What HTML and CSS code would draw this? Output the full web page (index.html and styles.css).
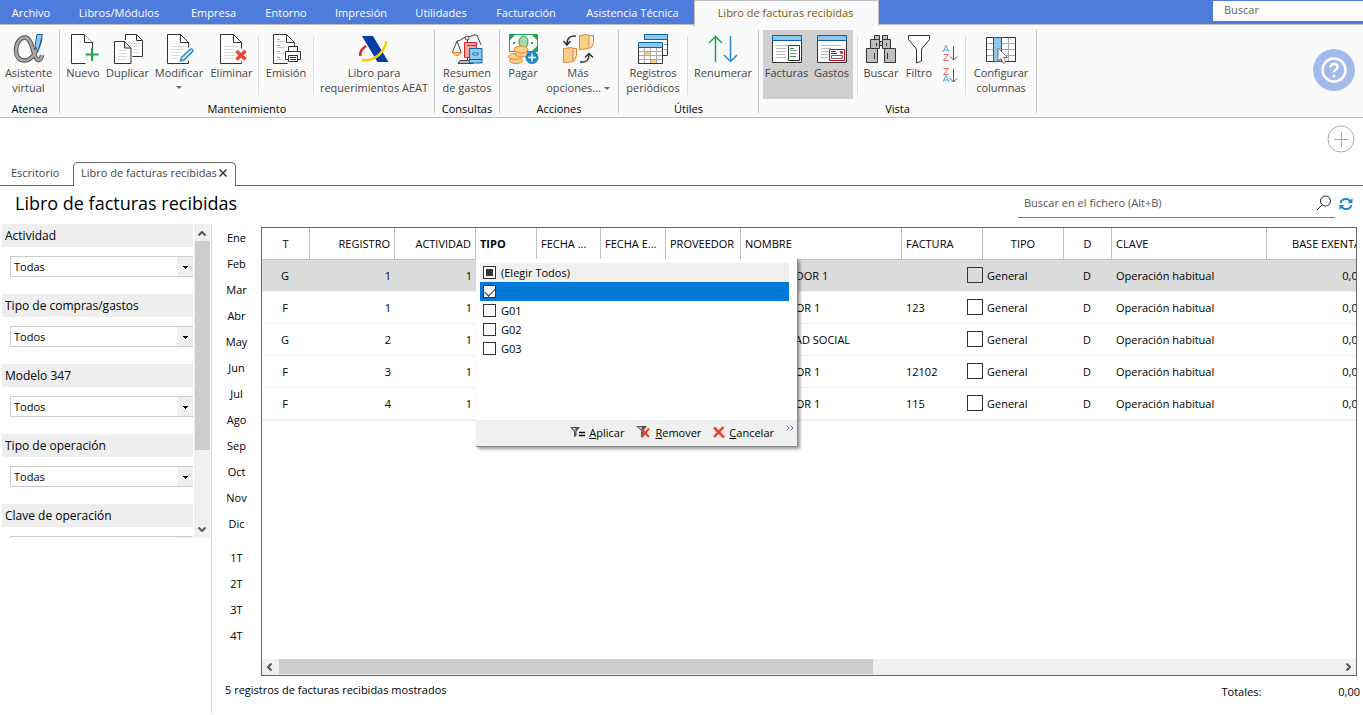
FILE: index.html
```
<!DOCTYPE html>
<html lang="es">
<head>
<meta charset="utf-8">
<title>Libro de facturas recibidas</title>
<link rel="stylesheet" href="styles.css">
</head>
<body>
<div class="app">
  <header class="menubar">
    <nav class="menu">
      <a href="#">Archivo</a><a href="#">Libros/Módulos</a><a href="#">Empresa</a><a href="#">Entorno</a><a href="#">Impresión</a><a href="#">Utilidades</a><a href="#">Facturación</a><a href="#">Asistencia Técnica</a><a href="#" class="current">Libro de facturas recibidas</a>
    </nav>
    <input class="menu-search" type="text" placeholder="Buscar" aria-label="Buscar">
  </header>

  <div class="ribbon">
    <section class="group g-atenea">
      <div class="tools">
        <button><svg class="ico" viewBox="12 33 32 32"><path d="M39.500 38C37 48 32 60.500 23.500 60.500C17.500 60.500 15 56 15 50C15 43 19 37.500 24 37.500C32 37.500 32 60 37.500 60C39.500 60 40.500 58 41 55" fill="none" stroke="#4f4f4f" stroke-width="4.500"/><path d="M39.500 38C37 48 32 60.500 23.500 60.500C17.500 60.500 15 56 15 50C15 43 19 37.500 24 37.500C32 37.500 32 60 37.500 60C39.500 60 40.500 58 41 55" fill="none" stroke="#aaa" stroke-width="2.500"/><path d="M36 34.500h5.500l-4.500 17-3-6z" fill="#91c8ee" stroke="#0b63ad"/></svg><span>Asistente<br>virtual</span></button>
      </div>
      <h2>Atenea</h2>
    </section>

    <section class="group g-mant">
      <div class="tools">
        <button><svg class="ico" viewBox="67 33 32 32"><path d="M71.500 34.500h13l8 8v9M71.500 34.500v29h14" class="page"/><path d="M84.500 34.500v8h8" class="page"/><path d="M85.500 54.500h13M92 48v13" stroke="#1aa64b" stroke-width="2"/></svg><span>Nuevo</span></button>
        <button><svg class="ico" viewBox="111 33 32 32"><path d="M124.500 40v-5.500h11l6 6v16h-10M135.500 34.500v6h6" class="page"/><path d="M113.500 41.500h10l6.500 6.500v15.500h-16.500zM123.500 41.500v6.500h6.500" class="page"/><path d="M117 50.500h9M117 53.500h9M117 56.500h9M117 59.500h9M130 43.500h8M132 46.500h6M132 49.500h6M132 52.500h6" class="rule"/></svg><span>Duplicar</span></button>
        <button><svg class="ico" viewBox="163 33 32 32"><path d="M167.500 34.500h13l8 8v5M167.500 34.500v29h21v-3M180.500 34.500v8h8" class="page"/><path d="M171 46.500h14M171 49.500h12M171 52.500h11M171 55.500h9M171 58.500h6" class="rule"/><path d="M190 49.500q2.500-1.500 3 1.500l-9 9-3.500 1 1-3.500z" fill="#d8edf9" stroke="#288dcc" stroke-width="1.500"/></svg><span>Modificar</span><i class="caret"></i></button>
        <button><svg class="ico" viewBox="214 33 32 32"><path d="M218.500 34.500h13l8 8v6M218.500 34.500v29h21v-2M231.500 34.500v8h8" class="page"/><path d="M222 46.500h14M222 49.500h11M222 52.500h11M222 55.500h11M222 58.500h11" class="rule"/><path d="M234.500 51l9 8.500M243.500 51l-9 8.500" stroke="#ee4137" stroke-width="3.500"/></svg><span>Eliminar</span></button>
        <i class="sep"></i>
        <button><svg class="ico" viewBox="270 33 32 32"><path d="M273.500 34.500h13l8 8v4M273.500 34.500v29h14M286.500 34.500v8h8" class="page"/><path d="M277 39.500h3M277 45.500h3M277 51.500h3M277 57.500h3" stroke="#f0932c"/><path d="M277 41.500h7M277 47.500h8M277 53.500h7M277 59.500h7" stroke="#ccc"/><path d="M288.500 51v-4.500h9V51M288 59.500h-2.500v-8h15v8H298" class="page"/><path d="M288.500 55.500h9v6h-9zM290 57.500h6M290 59.500h6" class="page"/></svg><span>Emisión</span></button>
        <i class="sep tight"></i>
        <button><svg class="ico" viewBox="358 33 32 32"><path d="M362 36h11l15.500 26h-11z" fill="#003da5"/><path d="M366 46q-7 5-5.500 10" fill="none" stroke="#dd2727" stroke-width="2.500"/><path d="M362 60c12 2 22-7 24.500-19" fill="none" stroke="#fc0" stroke-width="2.500"/></svg><span>Libro para<br>requerimientos AEAT</span></button>
      </div>
      <h2>Mantenimiento</h2>
    </section>

    <section class="group g-cons">
      <div class="tools">
        <button><svg class="ico" viewBox="451 33 32 32"><path d="M457 41c5 0 5-4 10-4s5-3 10-2M467.500 36v25M457 41l-4.500 11M457 41l4 11M477 35l4 10" fill="none" stroke="#444"/><circle cx="467" cy="38" r="2" fill="#fafafa" stroke="#444"/><path d="M452.500 52.500h9q-1 3-4.500 3t-4.500-3z" fill="#f8cf83" stroke="#e98532"/><path d="M458 63.500l2-3h13v3z" fill="#bbb" stroke="#444"/><path d="M464.500 42.500h12v15h-12z" fill="#f6a9a6" stroke="#e32222"/><path d="M467 45.500h10" stroke="#e32222"/><path d="M469.500 48.500h12.500v14.500h-12.500z" fill="#92c8ee" stroke="#0b63ad"/><path d="M473 53h5v2h-5z" fill="#fff" stroke="#0b63ad"/><path d="M470 59.500h12" stroke="#0b63ad"/></svg><span>Resumen<br>de gastos</span></button>
      </div>
      <h2>Consultas</h2>
    </section>

    <section class="group g-acc">
      <div class="tools">
        <button><svg class="ico" viewBox="507 33 32 32"><path d="M509.500 34.500h28v17h-28z" fill="#fff" stroke="#1aa64b"/><path d="M510 35h5l-5 5zM537 35h-5l5 5zM537 51h-5l5-5z" fill="#1aa64b"/><ellipse cx="523.500" cy="42" rx="4.500" ry="6" fill="#a8d9b1" stroke="#1aa64b"/><path d="M513 43h2M531 43h2" stroke="#1aa64b" stroke-width="2"/><g fill="#fbd08a" stroke="#e98532"><ellipse cx="516" cy="60.500" rx="6.500" ry="3"/><ellipse cx="515" cy="56.500" rx="6.500" ry="3"/><ellipse cx="522" cy="54" rx="6.500" ry="3"/><ellipse cx="521" cy="49.500" rx="7" ry="3.500"/></g><circle cx="532" cy="57.500" r="6.500" fill="#1e88cf"/><path d="M528 57.500h8M532 53.500v8" stroke="#fff" stroke-width="1.500"/></svg><span>Pagar</span></button>
        <button><svg class="ico" viewBox="562 33 32 32"><path d="M589 35.500h4.500v7l-2 5-2.500.5M572 48.500h4.500v7l-2 5-2.500.5" fill="#fbe8c4" stroke="#e98532"/><path d="M579.500 35.500l8-1 1.500 1v13l-9.500 1zM563.500 48.500l8-1 1.500 1v13l-9.500 1z" fill="#f7cf88" stroke="#e98532"/><path d="M576 36q-9-1-9 8M563.500 41l3.500 4 3.500-4M580 62q9 1 9-7M585 57.500l4-4 4 4" fill="none" stroke="#333" stroke-width="1.500"/></svg><span>Más<br>opciones... <i class="caret inline"></i></span></button>
      </div>
      <h2>Acciones</h2>
    </section>

    <section class="group g-utiles">
      <div class="tools">
        <button><svg class="ico" viewBox="637 33 32 32"><path d="M644.500 40v-5.500h23V55.500H663" fill="#fff" stroke="#333"/><path d="M644.500 34.500h23v5h-23z" fill="#92c8ee" stroke="#0b63ad"/><path d="M638.500 46.500h24v17h-24z" fill="#fff" stroke="#333"/><path d="M645 52h5v3h-5zM651 60h5v3h-5z" fill="#f8cf83"/><path d="M639 51.500h23M639 55.500h23M639 59.500h23M644.500 47v16M650.500 47v16M656.500 47v16M664 44.500h3M664 49.500h3" stroke="#aaa"/><path d="M638.500 42.500h24v5h-24z" fill="#92c8ee" stroke="#0b63ad"/></svg><span>Registros<br>periódicos</span></button>
        <i class="sep tight"></i>
        <button><svg class="ico" viewBox="707 33 32 32"><path d="M715.500 62V37M709 43l6.500-6.500L722 43" fill="none" stroke="#1aa64b" stroke-width="1.500"/><path d="M730.500 36v25M724 55l6.500 6.500L737 55" fill="none" stroke="#288dcc" stroke-width="1.500"/></svg><span>Renumerar</span></button>
      </div>
      <h2>Útiles</h2>
    </section>

    <section class="group g-vista">
      <div class="tools">
        <button class="pressed"><svg class="ico" viewBox="771 33 32 32"><path d="M772.500 35.500h29v27h-29z" fill="#fff" stroke="#333"/><path d="M772.500 35.500h29v5h-29z" fill="#92c8ee" stroke="#0b63ad"/><path d="M776 45.500h20M776 48.500h10M776 51.500h10M776 54.500h10M776 57.500h10" stroke="#bbb"/><path d="M788.500 45.500h11v15h-11z" fill="#fff" stroke="#333"/><path d="M790 48.500h4M790 56.500h6" stroke="#1aa64b"/><path d="M790 50.500h7M790 53.500h7" stroke="#999"/></svg><span>Facturas</span></button>
        <button class="pressed"><svg class="ico" viewBox="816 33 32 32"><path d="M817.500 35.500h29v27h-29z" fill="#fff" stroke="#333"/><path d="M817.500 35.500h29v5h-29z" fill="#92c8ee" stroke="#0b63ad"/><path d="M821 45.500h20M821 48.500h10M821 51.500h7M821 54.500h7M821 57.500h7" stroke="#bbb"/><path d="M829.500 49.500h15v11h-15z" fill="#fff" stroke="#d9001b"/><path d="M831 51.500h5M831 53.500h6" stroke="#333"/><path d="M840 51h3v3h-3z" fill="#ee4137"/><path d="M831.500 55.500h11v3h-11z" fill="#fff" stroke="#666"/></svg><span>Gastos</span></button>
        <i class="sep"></i>
        <button><svg class="ico" viewBox="865 33 32 32"><g fill="#bfbfbf" stroke="#333"><path d="M874.500 35.500h5v5h-5zM882.500 35.500h5v5h-5zM879.500 41.500h3v4h-3z"/><path d="M870.500 39.500h9v9h-9zM882.500 39.500h8v9h-8z"/><path d="M866.500 48.500h11v14h-11zM884.500 48.500h11v14h-11z"/></g><path d="M874.500 53v6M887.500 53v6M876.500 43v3M886.500 43v3" stroke="#333"/></svg><span>Buscar</span></button>
        <button><svg class="ico" viewBox="904 33 32 32"><path d="M909.500 35.500h21v4l-8 9.500v12l-5 2V49l-8-9.500z" class="page"/></svg><span>Filtro</span></button>
        <button class="sorts" aria-label="Ordenar"><svg class="sort" viewBox="0 0 16 38"><g fill="none" stroke="#5aa8dc"><path d="M1 7l3-6.500L7 7M2 5h4M1 37l3-6.500L7 37M2 35h4"/></g><g fill="none" stroke="#ee6b64"><path d="M1.500 9.500h5l-5 6h5M1.500 23.500h5l-5 6h5"/></g><path d="M11.500 1v14M8 11.500l3.500 3.500 3.500-3.500M11.500 24v13M8 33.500l3.500 3.500 3.500-3.500" fill="none" stroke="#555"/></svg></button>
        <i class="sep tight"></i>
        <button><svg class="ico" viewBox="985 33 32 32"><path d="M986.500 37.500h29v24h-29z" fill="#fff" stroke="#333"/><path d="M987 43.500h28M987 49.500h28M987 55.500h28M1008.500 38v23" stroke="#aaa"/><path d="M993.500 37.500h8v24h-8z" fill="#92c8ee" stroke="#0b63ad"/><path d="M998 48v13l3-2.500 2.500 5 2.500-1.500-2.500-4.500h4z" fill="#fff" stroke="#777"/></svg><span>Configurar<br>columnas</span></button>
      </div>
      <h2>Vista</h2>
    </section>
    <button class="help" aria-label="Ayuda"><svg viewBox="0 0 42 42"><circle cx="21" cy="21" r="21" fill="#a4baeb"/><circle cx="21" cy="21" r="11.500" fill="none" stroke="#fff" stroke-width="2.500"/><path d="M17.500 18.500q0-3.500 3.500-3.500t3.500 3q0 2-2 3-1.500 1-1.500 2.500" fill="none" stroke="#fff" stroke-width="2.500"/><circle cx="21" cy="27" r="1.500" fill="#fff"/></svg></button>
  </div>

  <div class="tabs">
    <a href="#" class="tab">Escritorio</a>
    <div class="tab active"><a href="#">Libro de facturas recibidas</a><button aria-label="Cerrar"><svg viewBox="0 0 8 8"><path d="M.5.5l7 7M7.500.5l-7 7" stroke="#333" stroke-width="1.500"/></svg></button></div>
    <button class="add" aria-label="Añadir"><svg viewBox="0 0 28 28"><circle cx="14" cy="14" r="13" fill="#fff" stroke="#aaa"/><path d="M7 14.500h15M14.500 7v15" stroke="#aaa"/></svg></button>
  </div>

  <div class="heading">
    <h1>Libro de facturas recibidas</h1>
    <div class="filebox"><input type="text" placeholder="Buscar en el fichero (Alt+B)" aria-label="Buscar en el fichero"><svg viewBox="0 0 16 16"><circle cx="9.500" cy="6" r="5" fill="none" stroke="#222"/><path d="M6 10l-5 5" stroke="#222"/></svg></div>
    <button class="refresh" aria-label="Actualizar"><svg viewBox="0 0 14 14"><path d="M1.500 6Q2.500 2 7 2q3 0 4.500 2.500M12.500 8q-1 4-5.500 4-3 0-4.500-2.500" fill="none" stroke="#1e88cf" stroke-width="2"/><path d="M13.500 1v5h-5zM.5 13V8h5z" fill="#1e88cf"/></svg></button>
  </div>

  <main class="body">
    <aside class="side">
      <div class="filters">
        <div class="filter"><label for="f1">Actividad</label><select id="f1"><option>Todas</option></select></div>
        <div class="filter"><label for="f2">Tipo de compras/gastos</label><select id="f2"><option>Todos</option></select></div>
        <div class="filter"><label for="f3">Modelo 347</label><select id="f3"><option>Todos</option></select></div>
        <div class="filter"><label for="f4">Tipo de operación</label><select id="f4"><option>Todas</option></select></div>
        <div class="filter"><label for="f5">Clave de operación</label><select id="f5"><option>Todas</option></select></div>
      </div>
      <div class="vscroll"><svg viewBox="0 0 8 5"><path d="M.5 4.500L4 1l3.500 3.500" class="arrow"/></svg><div class="thumb"></div><svg viewBox="0 0 8 5"><path d="M.5.5L4 4 7.500.5" class="arrow"/></svg></div>
    </aside>

    <nav class="months">
      <a href="#">Ene</a><a href="#">Feb</a><a href="#">Mar</a><a href="#">Abr</a><a href="#">May</a><a href="#">Jun</a><a href="#">Jul</a><a href="#">Ago</a><a href="#">Sep</a><a href="#">Oct</a><a href="#">Nov</a><a href="#">Dic</a>
      <a href="#" class="quarter">1T</a><a href="#">2T</a><a href="#">3T</a><a href="#">4T</a>
    </nav>

    <section class="content">
      <div class="grid">
        <div class="viewport">
          <table>
            <colgroup><col class="w48"><col class="w85"><col class="w81"><col class="w61"><col class="w64"><col class="w65"><col class="w75"><col class="w161"><col class="w81"><col class="w81"><col class="w48"><col class="w155"><col class="w99"></colgroup>
            <thead><tr><th class="c">T</th><th class="r">REGISTRO</th><th class="r">ACTIVIDAD</th><th class="b">TIPO</th><th>FECHA ...</th><th>FECHA E...</th><th>PROVEEDOR</th><th>NOMBRE</th><th>FACTURA</th><th class="c">TIPO</th><th class="c">D</th><th>CLAVE</th><th class="r">BASE EXENTA</th></tr></thead>
            <tbody>
              <tr class="selected"><td class="c">G</td><td class="r">1</td><td class="r">1</td><td></td><td></td><td></td><td></td><td class="creditor">PROVEEDOR 1</td><td class="chk"><div><span></span><input type="checkbox" aria-label="Factura, fila 1"></div></td><td>General</td><td class="c">D</td><td>Operación habitual</td><td class="amt">0,00</td></tr>
              <tr><td class="c">F</td><td class="r">1</td><td class="r">1</td><td></td><td></td><td></td><td></td><td class="supplier">PROVEEDOR 1</td><td class="chk"><div><span>123</span><input type="checkbox" aria-label="Factura, fila 2"></div></td><td>General</td><td class="c">D</td><td>Operación habitual</td><td class="amt">0,00</td></tr>
              <tr><td class="c">G</td><td class="r">2</td><td class="r">1</td><td></td><td></td><td></td><td></td><td class="agency">SEGURIDAD SOCIAL</td><td class="chk"><div><span></span><input type="checkbox" aria-label="Factura, fila 3"></div></td><td>General</td><td class="c">D</td><td>Operación habitual</td><td class="amt">0,00</td></tr>
              <tr><td class="c">F</td><td class="r">3</td><td class="r">1</td><td></td><td></td><td></td><td></td><td class="supplier">PROVEEDOR 1</td><td class="chk"><div><span>12102</span><input type="checkbox" aria-label="Factura, fila 4"></div></td><td>General</td><td class="c">D</td><td>Operación habitual</td><td class="amt">0,00</td></tr>
              <tr><td class="c">F</td><td class="r">4</td><td class="r">1</td><td></td><td></td><td></td><td></td><td class="supplier">PROVEEDOR 1</td><td class="chk"><div><span>115</span><input type="checkbox" aria-label="Factura, fila 5"></div></td><td>General</td><td class="c">D</td><td>Operación habitual</td><td class="amt">0,00</td></tr>
            </tbody>
          </table>
        </div>
        <div class="hscroll"><svg viewBox="0 0 5 8"><path d="M4.500.5L1 4l3.500 3.500" class="arrow"/></svg><div class="track"><div class="thumb"></div></div><svg viewBox="0 0 5 8"><path d="M.5.5L4 4 .5 7.500" class="arrow"/></svg></div>

        <div class="popup">
          <div class="options">
            <label class="all"><input type="checkbox" class="mixed"><span>(Elegir Todos)</span></label>
            <label class="hot"><input type="checkbox" checked aria-label="Vacío"></label>
            <label><input type="checkbox"><span>G01</span></label>
            <label><input type="checkbox"><span>G02</span></label>
            <label><input type="checkbox"><span>G03</span></label>
          </div>
          <div class="actions">
            <button><svg viewBox="0 0 15 12"><path d="M0 1h10L6.500 5.500V10L4 11V5.500z" fill="#555"/><path d="M2.500 2h3L5 9V5z" fill="#ddd"/><path d="M9 6.500h6M9 9.500h6" stroke="#000" stroke-width="1.500"/></svg><span><u>A</u>plicar</span></button>
            <button><svg viewBox="0 0 15 12"><path d="M0 0h11L7.500 4.500V10L5 11V4.500z" fill="#555"/><path d="M2.500 1h3L6 8V4z" fill="#ddd"/><path d="M6 3.500l7 7.500M13 2.500L5.500 11.500" stroke="#e8401f" stroke-width="2"/></svg><span><u>R</u>emover</span></button>
            <button><svg class="narrow" viewBox="0 0 12 12"><path d="M1 1.500l10 10M10.500 1L1 11" stroke="#e8401f" stroke-width="2.500"/></svg><span><u>C</u>ancelar</span></button>
            <svg class="more" viewBox="0 0 8 6"><path d="M.5.500L3 3 .5 5.500M4.500.500L7 3 4.500 5.500" fill="none" stroke="#6464b0"/></svg>
          </div>
        </div>
      </div>
      <footer class="status"><span>5 registros de facturas recibidas mostrados</span><div class="totals"><span>Totales:</span><output>0,00</output></div></footer>
    </section>
  </main>
</div>
</body>
</html>
```
FILE: styles.css
```
* { box-sizing: border-box; }
body { margin: 0; font: 11px/15px "Open Sans", "Noto Sans", sans-serif; color: #000; background: #fff; }
a { color: inherit; text-decoration: none; }
h1, h2 { margin: 0; font-weight: 400; }
button { border: 0; padding: 0; background: none; font: inherit; color: inherit; }
input, select { font: inherit; color: inherit; margin: 0; }
svg { display: block; flex: none; }
.app { display: flex; flex-direction: column; height: 100vh; overflow: hidden; }

/* Menu bar */
.menubar { display: flex; justify-content: space-between; align-items: flex-start; height: 24px; background: #4e7cdd; flex: none; }
.menu { display: grid; grid-template-columns: 62px 114px 75px 70px 80px 80px 90px 123px 185px; height: 25px; line-height: 26px; text-align: center; color: #fff; }
.menu .current { position: relative; background: #fafafa; color: #7d5a0a; border: 1px solid #c0c0c0; border-bottom: 0; padding-right: 2px; line-height: 24px; z-index: 1; }
.menu-search { width: 150px; height: 21px; margin-top: 1px; border: 0; border-bottom: 1px solid #777; padding: 0 11px 3px; background: #fff; }
.menu-search::placeholder { color: #666; opacity: 1; }

/* Ribbon */
.ribbon { display: flex; flex: none; height: 94px; padding: 5px 0 4px; border-top: 1px solid #c0c0c0; border-bottom: 1px solid #c0c0c0; background: #fafafa; }
.group { display: flex; flex-direction: column; border-right: 1px solid #c4c4c4; }
.group h2 { margin-top: auto; font-size: 11px; line-height: 8px; text-align: center; }
.tools { display: grid; height: 69px; }
.tools button { display: flex; flex-direction: column; align-items: center; padding-top: 3px; color: #444; text-align: center; white-space: nowrap; min-width: 0; }
.ico { width: 32px; height: 32px; }
.page { fill: #fff; stroke: #333; }
.rule { fill: none; stroke: #ddd; }
.sep { width: 5px; height: 59px; margin-top: 6px; border-right: 1px solid #dcdcdc; }
.sep.tight { width: 1px; }
.g-atenea { width: 60px; } .g-atenea .tools { grid-template-columns: 57px; }
.g-mant { width: 375px; } .g-mant .tools { grid-template-columns: 46px 43px 60px 45px 5px 54px 1px 120px; }
.g-cons { width: 65px; } .g-cons .tools { grid-template-columns: 64px; }
.g-acc { width: 119px; } .g-acc .tools { grid-template-columns: 46px 64px; }
.g-utiles { width: 140px; } .g-utiles .tools { grid-template-columns: 68px 1px 70px; }
.g-vista { width: 278px; } .g-vista .tools { grid-template-columns: 47px 43px 5px 46px 30px 31px 1px 70px; padding-left: 4px; }
.tools .pressed { background: #d0d0d0; }
.tools .sorts { padding-top: 15px; }
.sort { width: 16px; height: 38px; }
.caret { display: block; margin-top: 6px; border: 3px solid transparent; border-top-color: #666; border-bottom: 0; }
.caret.inline { display: inline-block; margin: 0 0 2px; }
.help { margin: 19px 8px 0 auto; align-self: flex-start; }
.help svg { width: 42px; height: 42px; }

/* Document tabs */
.tabs { display: flex; align-items: flex-end; flex: none; height: 68px; border-bottom: 1px solid #666; color: #444; }
.tab { height: 24px; line-height: 23px; padding-left: 11px; width: 73px; }
.tab.active { display: flex; justify-content: space-between; align-items: center; width: 163px; padding: 0 8px 4px 7px; margin-bottom: -1px; border: 1px solid #666; border-bottom: 0; border-radius: 5px 5px 0 0; background: #fff; }
.tab button svg { width: 8px; height: 8px; }
.add { margin: 7px 8px auto auto; }
.add svg { width: 28px; height: 28px; }

/* Heading */
.heading { display: flex; flex: none; height: 38px; padding-left: 15px; }
.heading h1 { flex: 1; font-size: 18px; line-height: 34px; }
.filebox { display: flex; align-items: center; width: 317px; height: 32px; padding: 2px 3px 0 6px; border-bottom: 1px solid #777; }
.filebox input { flex: 1; min-width: 0; border: 0; padding: 0; background: none; }
.filebox input::placeholder { color: #555; opacity: 1; }
.filebox svg { width: 16px; height: 16px; }
.refresh { align-self: flex-start; margin: 11px 10px 0 4px; }
.refresh svg { width: 14px; height: 14px; }

/* Body */
.body { display: flex; flex: 1; min-height: 0; }
.side { display: flex; align-items: flex-start; width: 212px; margin-bottom: 2px; border-right: 1px solid #d8d8d8; }
.filters { width: 193px; max-height: 314px; padding-left: 2px; overflow: hidden; }
.filter { height: 70px; }
.filter label { display: block; height: 23px; padding-left: 3px; line-height: 23px; background: #eee; font-size: 12px; }
.filter select { display: block; width: 183px; height: 21px; margin: 9px 0 0 8px; padding: 0 3px; border: 1px solid #ccc; border-right: 0; border-radius: 0; appearance: none; background: linear-gradient(#000, #000) 172px 9px / 5px 1px no-repeat, linear-gradient(#000, #000) 173px 10px / 3px 1px no-repeat, linear-gradient(#000, #000) 174px 11px / 1px 1px no-repeat, linear-gradient(#f0f0f0, #f0f0f0) right / 16px no-repeat #fff; }
.vscroll { display: flex; flex-direction: column; align-items: center; width: 16px; height: 314px; margin-left: 1px; padding: 7px 0 6px; background: #f0f0f0; }
.vscroll svg { width: 8px; height: 5px; }
.vscroll .thumb { width: 15px; height: 209px; margin: 5px 0 auto; background: #cdcdcd; }
.arrow { fill: none; stroke: #555; stroke-width: 2; }
.months { display: flex; flex-direction: column; width: 49px; padding-top: 1px; line-height: 26px; text-align: center; }
.quarter { margin-top: 8px; }
.content { display: flex; flex-direction: column; flex: 1; min-width: 0; padding-top: 3px; }

/* Grid */
.grid { position: relative; display: flex; flex-direction: column; flex: 1; margin-right: 6px; border: 1px solid #666; min-width: 0; }
.viewport { flex: 1; overflow: hidden; }
table { width: 1104px; table-layout: fixed; border-collapse: separate; border-spacing: 0; white-space: nowrap; }
.w48 { width: 48px; } .w61 { width: 61px; } .w64 { width: 64px; } .w65 { width: 65px; } .w75 { width: 75px; }
.w81 { width: 81px; } .w85 { width: 85px; } .w99 { width: 99px; } .w155 { width: 155px; } .w161 { width: 161px; }
th, td { height: 32px; padding: 0 4px 1px; text-align: left; font-weight: 400; overflow: hidden; }
th { border-right: 1px solid #c0c0c0; border-bottom: 1px solid #c0c0c0; }
td { border-bottom: 1px solid #eee; }
tbody tr:last-child td { height: 33px; border-bottom-width: 2px; }
.selected { background: #dcdcdc; }
.r { text-align: right; }
.b { font-weight: 700; }
th.c { text-align: center; }
td.c { padding-right: 6px; text-align: center; }
td.creditor { padding-left: 14px; }
td.supplier { padding-left: 6px; }
td.agency { padding-left: 8px; }
td.chk { padding-right: 0; }
.chk div { display: flex; align-items: center; justify-content: space-between; }
.chk input { appearance: none; width: 16px; height: 16px; border: 1px solid #333; }
td.amt { padding-right: 2px; text-align: right; }
.hscroll { display: flex; align-items: center; height: 16px; padding: 0 5px; background: #f0f0f0; }
.hscroll svg { width: 5px; height: 8px; }
.hscroll .track { flex: 1; height: 16px; padding: 0 7px; }
.hscroll .thumb { width: 56%; height: 15px; background: #cdcdcd; }

/* Column filter popup */
.popup { position: absolute; left: 214px; top: 31px; display: flex; flex-direction: column; width: 322px; height: 188px; background: #fff; border-right: 1px solid #888; border-bottom: 1px solid #888; box-shadow: 2px 2px 3px rgba(0, 0, 0, .4); }
.options { flex: 1; padding: 4px 8px 0 4px; }
.options label { display: flex; align-items: center; gap: 5px; height: 19px; padding-left: 3px; }
.options .all { background: #f0f0f0; }
.options .hot { background: #0078d7; }
.options input { appearance: none; display: flex; justify-content: center; width: 13px; height: 13px; border: 1px solid #333; background: #fff; }
.options .mixed { background: #333; box-shadow: inset 0 0 0 2px #fff; }
.options input:checked::before { content: ""; width: 9px; height: 5px; margin-top: 2px; border: 1px solid #333; border-width: 0 0 1px 1px; transform: rotate(-45deg); }
.actions { display: flex; align-items: center; justify-content: flex-end; gap: 12px; height: 26px; padding: 0 3px 2px 0; background: #f0f0f0; }
.actions button { display: flex; align-items: center; gap: 4px; }
.actions svg { width: 15px; height: 12px; }
.actions .narrow { width: 12px; }
.actions .more { width: 8px; height: 6px; align-self: flex-start; margin-top: 5px; }

/* Status line */
.status { display: flex; justify-content: space-between; height: 39px; padding: 6px 3px 0 0; margin-left: -36px; }
.totals { display: flex; gap: 77px; padding-top: 2px; }
```
